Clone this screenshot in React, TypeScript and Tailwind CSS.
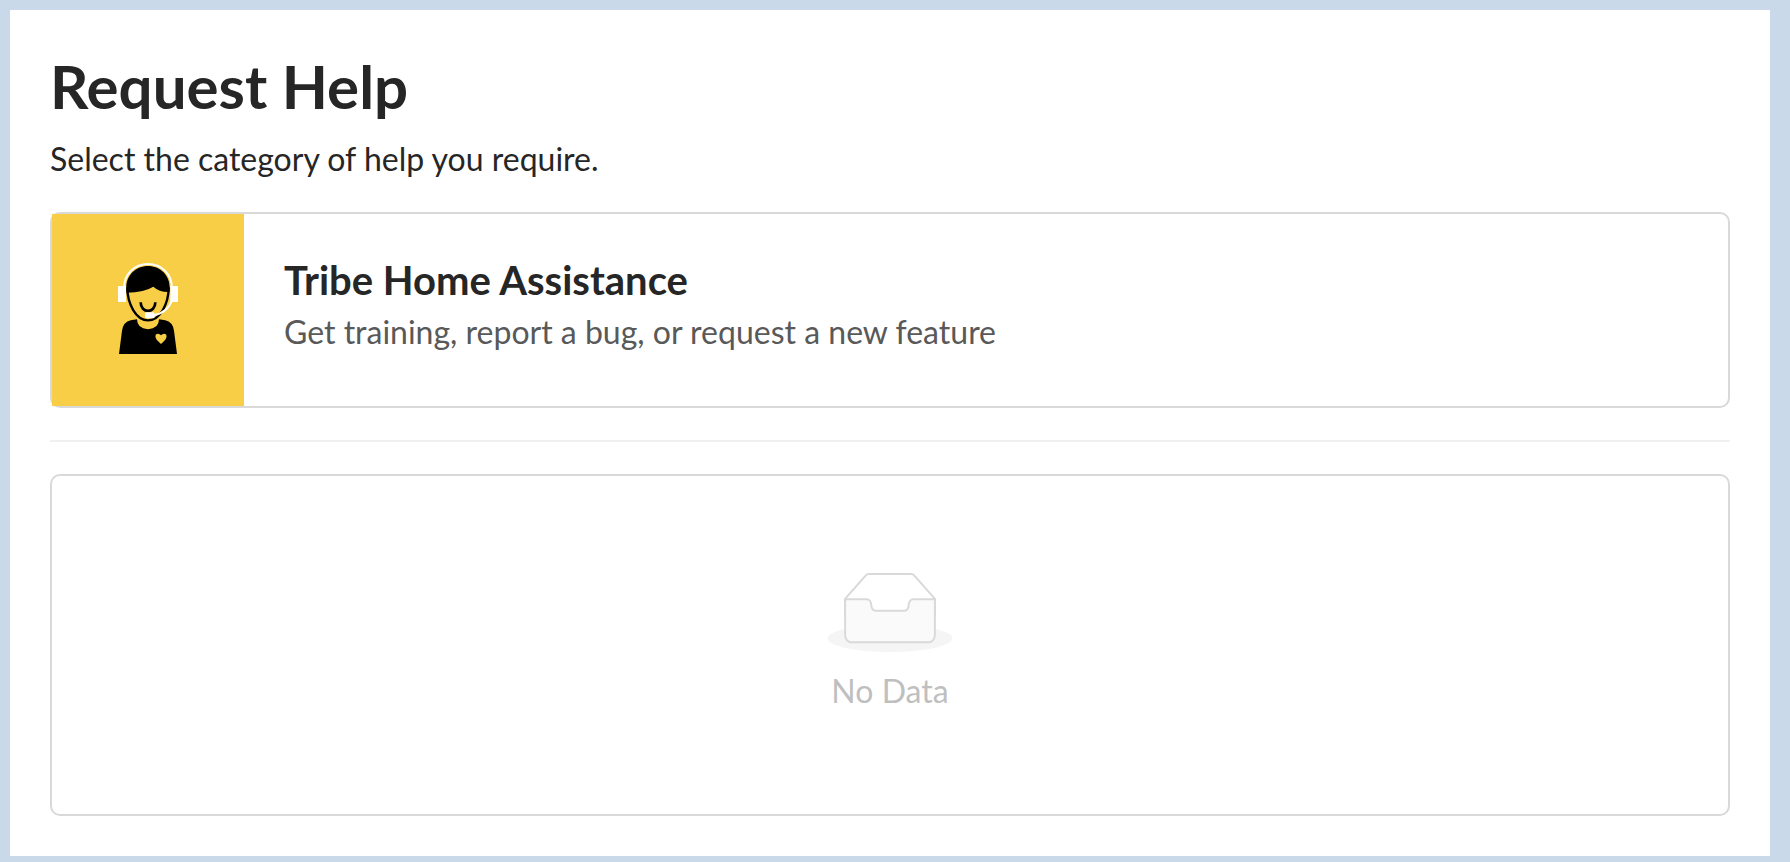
interface HelpCategoryProps {
  title: string;
  description: string;
  href: string;
}

function AgentIcon() {
  return (
    <svg viewBox="36 42 576 576" className="h-48 w-48" aria-hidden="true">
      <path
        d="M237 462 L246 392 Q250 366 272 361 L291 358 Q291 386 324 388 Q357 386 357 358 L376 361 Q398 366 402 392 L411 462 Z"
        fill="#000"
      />
      <path
        d="M363 432 L350 419 Q344 411 347 404 Q355 398 363 406 Q371 398 379 404 Q382 411 376 419 Z"
        fill="#f8ce46"
      />
      <path
        d="M262 262 C262 312 288 361 324 361 C360 361 386 312 386 262"
        fill="#f8ce46"
        stroke="#000"
        strokeWidth="7"
      />
      <path
        d="M259 276 V262 C259 225 288 198 324 198 C360 198 389 225 389 262 V276 Q360 278 340 260 Q315 276 259 278 Z"
        fill="#000"
      />
      <path d="M302 307 C302 341 346 341 346 307" fill="none" stroke="#000" strokeWidth="8" />
      <path
        d="M253 262 C251 224 283 192 324 192 C365 192 397 224 395 262"
        fill="none"
        stroke="#fff"
        strokeWidth="6"
      />
      <path d="M396 300 Q384 338 340 346" fill="none" stroke="#fff" strokeWidth="6" />
      <rect x="234" y="258" width="24" height="48" rx="2" fill="#fff" />
      <rect x="391" y="258" width="23" height="48" rx="2" fill="#fff" />
      <rect x="315" y="337" width="29" height="18" rx="5" fill="#fff" />
    </svg>
  );
}

function EmptyIcon() {
  return (
    <svg viewBox="0 0 64 41" className="h-20 w-32" aria-hidden="true">
      <g transform="translate(0 1)" fill="none">
        <ellipse fill="#f5f5f5" cx="32" cy="33" rx="32" ry="7" />
        <g stroke="#d9d9d9">
          <path d="M55 12.76L44.854 1.258C44.367.474 43.656 0 42.907 0H21.093c-.749 0-1.46.474-1.947 1.257L9 12.761V22h46v-9.24z" />
          <path
            d="M41.613 15.931c0-1.605.994-2.93 2.227-2.931H55v18.137C55 33.26 53.68 35 52.05 35h-40.1C10.32 35 9 33.259 9 31.137V13h11.16c1.233 0 2.227 1.323 2.227 2.928v.022c0 1.605 1.005 2.901 2.237 2.901h14.752c1.232 0 2.237-1.308 2.237-2.913v-.007z"
            fill="#fafafa"
          />
        </g>
      </g>
    </svg>
  );
}

function HelpCategory({ title, description, href }: HelpCategoryProps) {
  return (
    <a href={href} className="flex items-center rounded-[10px] border-2 border-[#d9d9d9]">
      <div className="shrink-0 bg-[#f8ce46]">
        <AgentIcon />
      </div>
      <div className="px-10 pb-2">
        <h2 className="text-[40px] leading-[52px] font-bold text-[#262626]">{title}</h2>
        <p className="text-[32px] leading-[52px] text-[#595959]">{description}</p>
      </div>
    </a>
  );
}

export default function App() {
  return (
    <div className="min-h-screen bg-[#c9d9e9] pt-[10px] pr-5 pb-[6px] pl-[10px] font-['Lato',sans-serif]">
      <main className="bg-white p-10 text-[#262626]">
        <h1 className="text-[60px] leading-[72px] font-bold">Request Help</h1>
        <p className="mt-2 mb-6 text-[32px] leading-[58px]">
          Select the category of help you require.
        </p>
        <HelpCategory
          title="Tribe Home Assistance"
          description="Get training, report a bug, or request a new feature"
          href="#assistance"
        />
        <hr className="my-8 border-t-2 border-[#f0f0f0]" />
        <section className="flex flex-col items-center rounded-[10px] border-2 border-[#d9d9d9] py-24">
          <EmptyIcon />
          <p className="mt-3 text-[32px] leading-[54px] text-[#bfbfbf]">No Data</p>
        </section>
      </main>
    </div>
  );
}
